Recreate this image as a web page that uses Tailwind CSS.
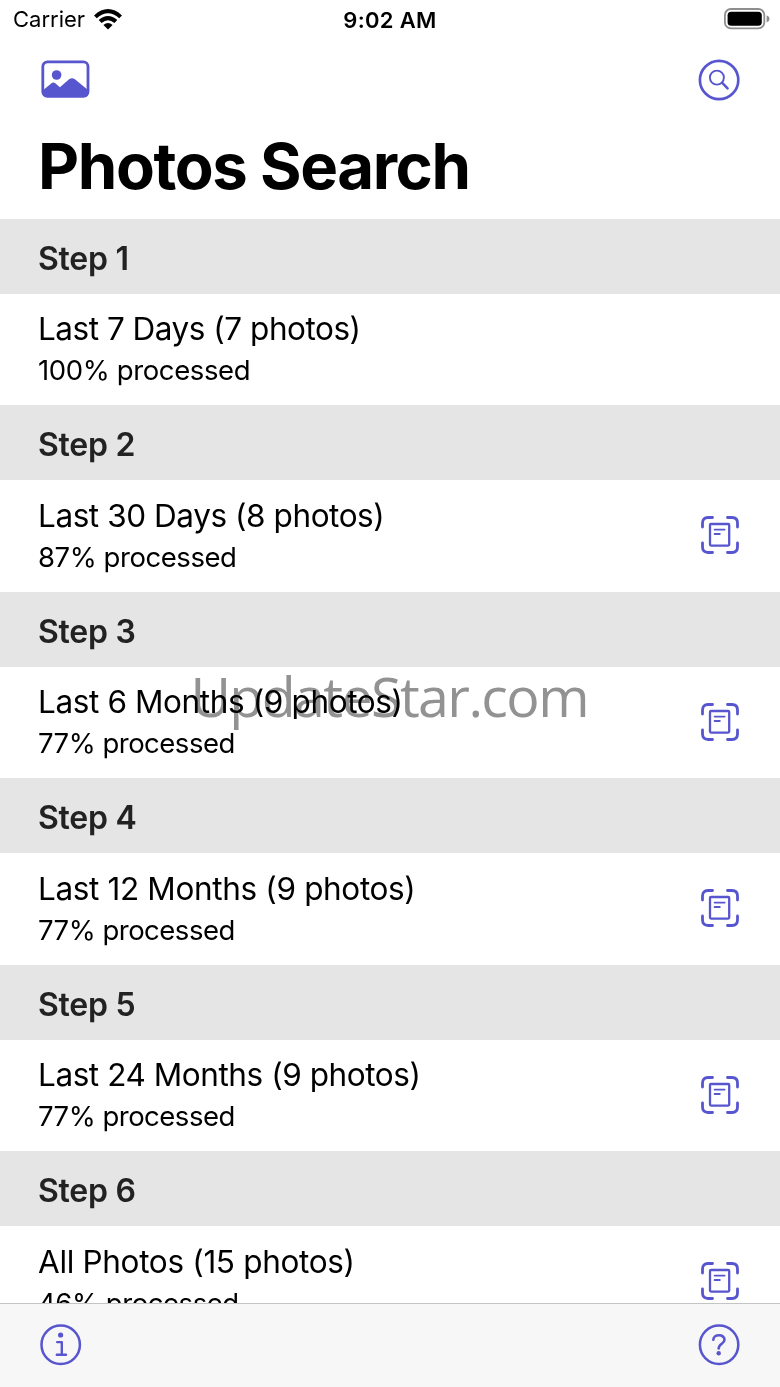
<!DOCTYPE html>
<html lang="en">
<head>
<meta charset="utf-8">
<title>Photos Search</title>
<script src="https://cdn.jsdelivr.net/npm/@tailwindcss/browser@4"></script>
</head>
<body class="bg-white">
<svg class="hidden">
  <symbol id="scan" viewBox="0 0 40 40">
    <g fill="none" stroke="currentColor" stroke-linecap="round" stroke-linejoin="round">
      <path stroke-width="2.8" d="M2.5 12V8Q2.5 2.5 8 2.5H12.5M27.5 2.5H32Q37.5 2.5 37.5 8V12M37.5 28V32Q37.5 37.5 32 37.5H27.5M12.5 37.5H8Q2.5 37.5 2.5 32V28"/>
      <rect x="10" y="9" width="19.2" height="21.6" rx="1" stroke-width="2.3"/>
      <path stroke-width="1.9" d="M14.6 14.6H24.6M14.6 19H19.8"/>
    </g>
  </symbol>
</svg>
<div class="relative flex flex-col w-[780px] h-[1387px] overflow-hidden bg-white text-black font-['Inter','Liberation_Sans',sans-serif]">
  <header class="h-[218.7px] shrink-0 flex flex-col">
    <div class="h-10 shrink-0 grid grid-cols-3 items-center pl-[13px] pr-[10px]">
      <div class="flex items-center gap-[9px] -mt-0.5">
        <span class="text-[22px] leading-10 tracking-[0px]">Carrier</span>
        <svg class="w-7 h-[21px]" viewBox="0 0 28 21"><path d="M0 6.4Q14 -6.4 28 6.4L25.2 9.3Q14 -.8 2.8 9.3ZM4.7 11.1Q14 2.8 23.3 11.1L20.4 14Q14 8.4 7.6 14ZM9.4 15.9Q14 12.1 18.6 15.9L14 20.6Z"/></svg>
      </div>
      <span class="text-center text-[22px] leading-10 font-semibold tracking-[0.3px] pr-[3px]">9:02 AM</span>
      <svg class="w-[46px] h-[22px] justify-self-end -mt-0.5" viewBox="0 0 46 22"><rect x=".9" y="1" width="39.4" height="19.4" rx="6" fill="none" stroke="#8d8d8d" stroke-width="1.8"/><rect x="3.6" y="3.8" width="34.2" height="14" rx="3.6"/><path d="M42.6 7.2Q45.6 8.4 45.6 10.8T42.6 14.4Z" fill="#8d8d8d"/></svg>
    </div>
    <div class="h-20 shrink-0 flex items-center justify-between pl-[41px] pr-10 text-[#5856ce]">
      <svg class="w-[49px] h-[38px] -mt-0.5" viewBox="0 0 49 38"><rect x="1.8" y="1.8" width="45.2" height="34.6" rx="4.6" fill="none" stroke="currentColor" stroke-width="2.8"/><circle cx="15.6" cy="15" r="4.8" fill="currentColor"/><path d="M2 30.2L10.2 23.4Q12.3 21.5 14.3 23.3L18.9 27.3L28.1 19.3Q31 17 33.9 19.3L47 30V33Q47 37 43 37H6Q2 37 2 33Z" fill="currentColor"/></svg>
      <svg class="w-[42px] h-[42px] -mt-px" viewBox="0 0 42 42" fill="none" stroke="currentColor"><circle cx="21.1" cy="21" r="19.2" stroke-width="2.7"/><circle cx="18.9" cy="18.6" r="7" stroke-width="1.9"/><path d="M24.2 23.9L29.6 29.3" stroke-width="2.5" stroke-linecap="round"/></svg>
    </div>
    <h1 class="pl-[38px] h-[90px] text-[63.5px] leading-[91px] font-bold tracking-[-1.4px] whitespace-nowrap">Photos Search</h1>
  </header>

  <main class="relative h-[1084.3px] shrink-0 overflow-hidden">
    <section><h2 class="h-[75px] bg-[#e5e5e5] pl-[38px] text-[32px] leading-[79px] font-semibold tracking-[-0.25px] text-[#222]">Step 1</h2><div class="h-[111.5px] pl-[38px] pr-[40px] flex items-center justify-between"><div class="whitespace-nowrap -mt-[1.5px]"><p class="text-[31.5px] leading-[43px] tracking-[-0.48px]">Last 7 Days (7 photos)</p><p class="text-[27.5px] leading-[40px] tracking-[-0.38px]">100% processed</p></div></div></section>
    <section><h2 class="h-[75px] bg-[#e5e5e5] pl-[38px] text-[32px] leading-[79px] font-semibold tracking-[-0.25px] text-[#222]">Step 2</h2><div class="h-[111.5px] pl-[38px] pr-[40px] flex items-center justify-between"><div class="whitespace-nowrap -mt-[1.5px]"><p class="text-[31.5px] leading-[43px] tracking-[-0.43px]">Last 30 Days (8 photos)</p><p class="text-[27.5px] leading-[40px] tracking-[-0.44px]">87% processed</p></div><svg class="w-10 h-10 -mt-px text-[#5856ce]"><use href="#scan"/></svg></div></section>
    <section><h2 class="h-[75px] bg-[#e5e5e5] pl-[38px] text-[32px] leading-[79px] font-semibold tracking-[-0.25px] text-[#222]">Step 3</h2><div class="h-[111.5px] pl-[38px] pr-[40px] flex items-center justify-between"><div class="whitespace-nowrap -mt-[1.5px]"><p class="text-[31.5px] leading-[43px] tracking-[-0.38px]">Last 6 Months (9 photos)</p><p class="text-[27.5px] leading-[40px] tracking-[-0.5px]">77% processed</p></div><svg class="w-10 h-10 -mt-px text-[#5856ce]"><use href="#scan"/></svg></div></section>
    <section><h2 class="h-[75px] bg-[#e5e5e5] pl-[38px] text-[32px] leading-[79px] font-semibold tracking-[-0.25px] text-[#222]">Step 4</h2><div class="h-[111.5px] pl-[38px] pr-[40px] flex items-center justify-between"><div class="whitespace-nowrap -mt-[1.5px]"><p class="text-[31.5px] leading-[43px] tracking-[-0.35px]">Last 12 Months (9 photos)</p><p class="text-[27.5px] leading-[40px] tracking-[-0.5px]">77% processed</p></div><svg class="w-10 h-10 -mt-px text-[#5856ce]"><use href="#scan"/></svg></div></section>
    <section><h2 class="h-[75px] bg-[#e5e5e5] pl-[38px] text-[32px] leading-[79px] font-semibold tracking-[-0.25px] text-[#222]">Step 5</h2><div class="h-[111.5px] pl-[38px] pr-[40px] flex items-center justify-between"><div class="whitespace-nowrap -mt-[1.5px]"><p class="text-[31.5px] leading-[43px] tracking-[-0.43px]">Last 24 Months (9 photos)</p><p class="text-[27.5px] leading-[40px] tracking-[-0.5px]">77% processed</p></div><svg class="w-10 h-10 -mt-px text-[#5856ce]"><use href="#scan"/></svg></div></section>
    <section><h2 class="h-[75px] bg-[#e5e5e5] pl-[38px] text-[32px] leading-[79px] font-semibold tracking-[-0.25px] text-[#222]">Step 6</h2><div class="h-[111.5px] pl-[38px] pr-[40px] flex items-center justify-between"><div class="whitespace-nowrap -mt-[1.5px]"><p class="text-[31.5px] leading-[43px] tracking-[-0.33px]">All Photos (15 photos)</p><p class="text-[27.5px] leading-[40px] tracking-[-0.44px]">46% processed</p></div><svg class="w-10 h-10 -mt-px text-[#5856ce]"><use href="#scan"/></svg></div></section>
  </main>

  <footer class="h-[84px] shrink-0 border-t border-[#c4c4c4] bg-[#f7f7f7] flex items-center justify-between px-10 text-[#5856ce]">
    <svg class="w-[42px] h-[42px]" viewBox="0 0 42 42" fill="none" stroke="currentColor" stroke-linecap="round" stroke-linejoin="round"><circle cx="20.7" cy="20.7" r="19.2" stroke-width="2.5"/><circle cx="20.6" cy="11" r="2.6" fill="currentColor" stroke="none"/><path stroke-width="2.4" d="M17.2 18.1H21.8V30.8M16.8 30.8H26"/></svg>
    <svg class="w-[42px] h-[42px]" viewBox="0 0 42 42" fill="none" stroke="currentColor" stroke-linecap="round" stroke-linejoin="round"><circle cx="21.1" cy="20.7" r="19.2" stroke-width="2.5"/><path stroke-width="2.6" d="M15.3 15.7C15.6 9.9 26.5 9.6 26.5 15.8C26.5 20 20.7 19.7 20.7 24.5"/><circle cx="20.7" cy="29.2" r="2.2" fill="currentColor" stroke="none"/></svg>
  </footer>

  <div class="absolute left-[190.5px] top-[656px] h-20 text-[55.5px] leading-20 tracking-[-1.6px] whitespace-nowrap text-[#929292] mix-blend-multiply font-['Open_Sans','Noto_Sans',sans-serif]">UpdateStar.com</div>
</div>
</body>
</html>
